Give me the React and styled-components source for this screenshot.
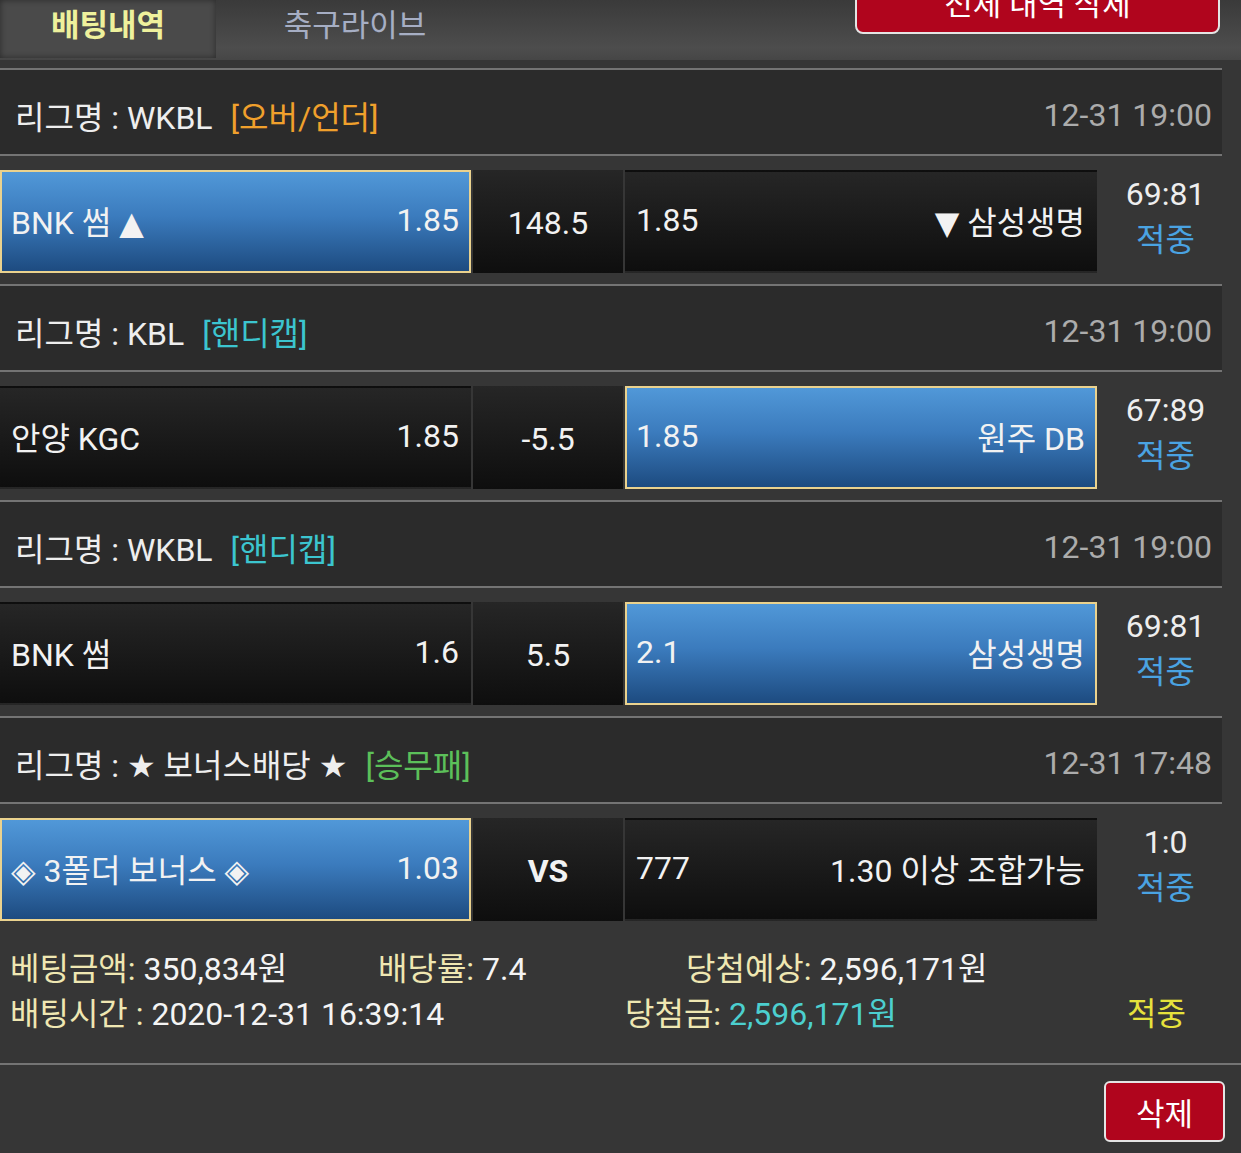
import React from "react";
import styled, { createGlobalStyle } from "styled-components";

const GlobalStyle = createGlobalStyle`
  * {
    margin: 0;
    padding: 0;
    box-sizing: border-box;
  }
  body {
    background: #363636;
    font-family: "Roboto", "DejaVu Sans", "Noto Sans CJK KR", sans-serif;
    color: #eeeeee;
  }
`;

const Page = styled.div`
  width: 1241px;
  min-height: 1153px;
  background: #363636;
  overflow: hidden;
`;

const TopBar = styled.div`
  display: flex;
  align-items: flex-start;
  height: 60px;
  background: linear-gradient(#3a3a3a, #4d4d4d 80%, #464646);
`;

const Tab = styled.div`
  width: ${(p) => p.width}px;
  height: 58px;
  display: flex;
  align-items: center;
  justify-content: center;
  padding-bottom: 14px;
  font-size: 31px;
  font-weight: ${(p) => (p.active ? 700 : 400)};
  color: ${(p) => (p.active ? "#eef19c" : "#a6aec4")};
  background: ${(p) => (p.active ? "#4a4a4a" : "transparent")};
  box-shadow: ${(p) => (p.active ? "inset 0 0 6px rgb(0 0 0 / 45%)" : "none")};
`;

const DeleteAll = styled.button`
  margin: -32px 21px 0 auto;
  width: 365px;
  height: 66px;
  background: #b0051d;
  border: 2px solid #e4e4e4;
  border-radius: 8px;
  color: #ffffff;
  font-family: inherit;
  font-size: 31px;
`;

const List = styled.div`
  width: 1222px;
  margin-top: 8px;
`;

const LeagueHeader = styled.div`
  display: flex;
  align-items: center;
  justify-content: space-between;
  height: 88px;
  padding: 5px 10px 0 15px;
  background: #2b2b2b;
  border-top: 2px solid #747474;
  border-bottom: 2px solid #747474;
  font-size: 32px;
`;

const LeagueName = styled.span`
  color: #eeeeee;
`;

const Tag = styled.span`
  margin-left: 18px;
  color: ${(p) => p.color};
`;

const Time = styled.span`
  color: #acacac;
`;

const BetRow = styled.div`
  display: grid;
  grid-template-columns: 471px 150px 472px 1fr;
  column-gap: 2px;
  padding: 14px 0 11px;
`;

const Pick = styled.div`
  height: 103px;
  display: flex;
  align-items: center;
  justify-content: space-between;
  padding: 0 10px 4px 9px;
  font-size: 32px;
  color: #f2f2f2;
  border: 2px solid ${(p) => (p.selected ? "#ead28e" : "transparent")};
  background: ${(p) =>
    p.selected
      ? "linear-gradient(#5198d8, #3b7bbd 45%, #1d4b80)"
      : "linear-gradient(#262626, #0e0e0e)"};
`;

const Handicap = styled.div`
  height: 103px;
  display: flex;
  align-items: center;
  justify-content: center;
  padding-top: 3px;
  font-size: 32px;
  font-weight: ${(p) => (p.bold ? 700 : 400)};
  color: #f2f2f2;
  background: linear-gradient(#262626, #0e0e0e);
`;

const Score = styled.div`
  display: flex;
  flex-direction: column;
  align-items: center;
  justify-content: center;
  gap: 6px;
  padding: 0 0 10px 10px;
  font-size: 32px;
  line-height: 40px;
`;

const Result = styled.span`
  color: #4aa3e2;
`;

const Summary = styled.div`
  padding: 15px 0 26px 10px;
  font-size: 32px;
  line-height: 45px;
`;

const SummaryLine = styled.div`
  display: grid;
  grid-template-columns: ${(p) => p.cols};
`;

const Label = styled.span`
  color: #efe7b2;
`;

const Value = styled.span`
  color: ${(p) => p.color || "#f4f4f4"};
`;

const Status = styled.span`
  color: #e6e23c;
  text-align: right;
  padding-right: 55px;
`;

const Footer = styled.div`
  display: flex;
  justify-content: flex-end;
  padding: 16px 16px 0 0;
  border-top: 2px solid #747474;
`;

const DeleteButton = styled.button`
  width: 121px;
  height: 61px;
  background: #b0051d;
  border: 2px solid #e4e4e4;
  border-radius: 6px;
  color: #ffffff;
  font-family: inherit;
  font-size: 31px;
`;

const bets = [
  {
    league: "WKBL",
    tag: "[오버/언더]",
    tagColor: "#f0a02c",
    time: "12-31 19:00",
    home: "BNK 썸 ▲",
    homeOdds: "1.85",
    line: "148.5",
    awayOdds: "1.85",
    away: "▼ 삼성생명",
    pick: "home",
    score: "69:81",
  },
  {
    league: "KBL",
    tag: "[핸디캡]",
    tagColor: "#3cc5cf",
    time: "12-31 19:00",
    home: "안양 KGC",
    homeOdds: "1.85",
    line: "-5.5",
    awayOdds: "1.85",
    away: "원주 DB",
    pick: "away",
    score: "67:89",
  },
  {
    league: "WKBL",
    tag: "[핸디캡]",
    tagColor: "#3cc5cf",
    time: "12-31 19:00",
    home: "BNK 썸",
    homeOdds: "1.6",
    line: "5.5",
    awayOdds: "2.1",
    away: "삼성생명",
    pick: "away",
    score: "69:81",
  },
  {
    league: "★ 보너스배당 ★",
    tag: "[승무패]",
    tagColor: "#5cc05a",
    time: "12-31 17:48",
    home: "◈ 3폴더 보너스 ◈",
    homeOdds: "1.03",
    line: "VS",
    awayOdds: "777",
    away: "1.30 이상 조합가능",
    pick: "home",
    score: "1:0",
  },
];

export default function App() {
  return (
    <Page>
      <GlobalStyle />
      <TopBar>
        <Tab active width={216}>배팅내역</Tab>
        <Tab width={278}>축구라이브</Tab>
        <DeleteAll>전체 내역 삭제</DeleteAll>
      </TopBar>

      <List>
        {bets.map((b, i) => (
          <div key={i}>
            <LeagueHeader>
              <div>
                <LeagueName>리그명 : {b.league}</LeagueName>
                <Tag color={b.tagColor}>{b.tag}</Tag>
              </div>
              <Time>{b.time}</Time>
            </LeagueHeader>
            <BetRow>
              <Pick selected={b.pick === "home"}>
                <span>{b.home}</span>
                <span>{b.homeOdds}</span>
              </Pick>
              <Handicap bold={b.line === "VS"}>{b.line}</Handicap>
              <Pick selected={b.pick === "away"}>
                <span>{b.awayOdds}</span>
                <span>{b.away}</span>
              </Pick>
              <Score>
                <span>{b.score}</span>
                <Result>적중</Result>
              </Score>
            </BetRow>
          </div>
        ))}
      </List>

      <Summary>
        <SummaryLine cols="368px 308px auto">
          <span>
            <Label>베팅금액: </Label>
            <Value>350,834원</Value>
          </span>
          <span>
            <Label>배당률: </Label>
            <Value>7.4</Value>
          </span>
          <span>
            <Label>당첨예상: </Label>
            <Value>2,596,171원</Value>
          </span>
        </SummaryLine>
        <SummaryLine cols="615px 1fr auto">
          <span>
            <Label>배팅시간 : </Label>
            <Value>2020-12-31 16:39:14</Value>
          </span>
          <span>
            <Label>당첨금: </Label>
            <Value color="#4ccfcf">2,596,171원</Value>
          </span>
          <Status>적중</Status>
        </SummaryLine>
      </Summary>

      <Footer>
        <DeleteButton>삭제</DeleteButton>
      </Footer>
    </Page>
  );
}
